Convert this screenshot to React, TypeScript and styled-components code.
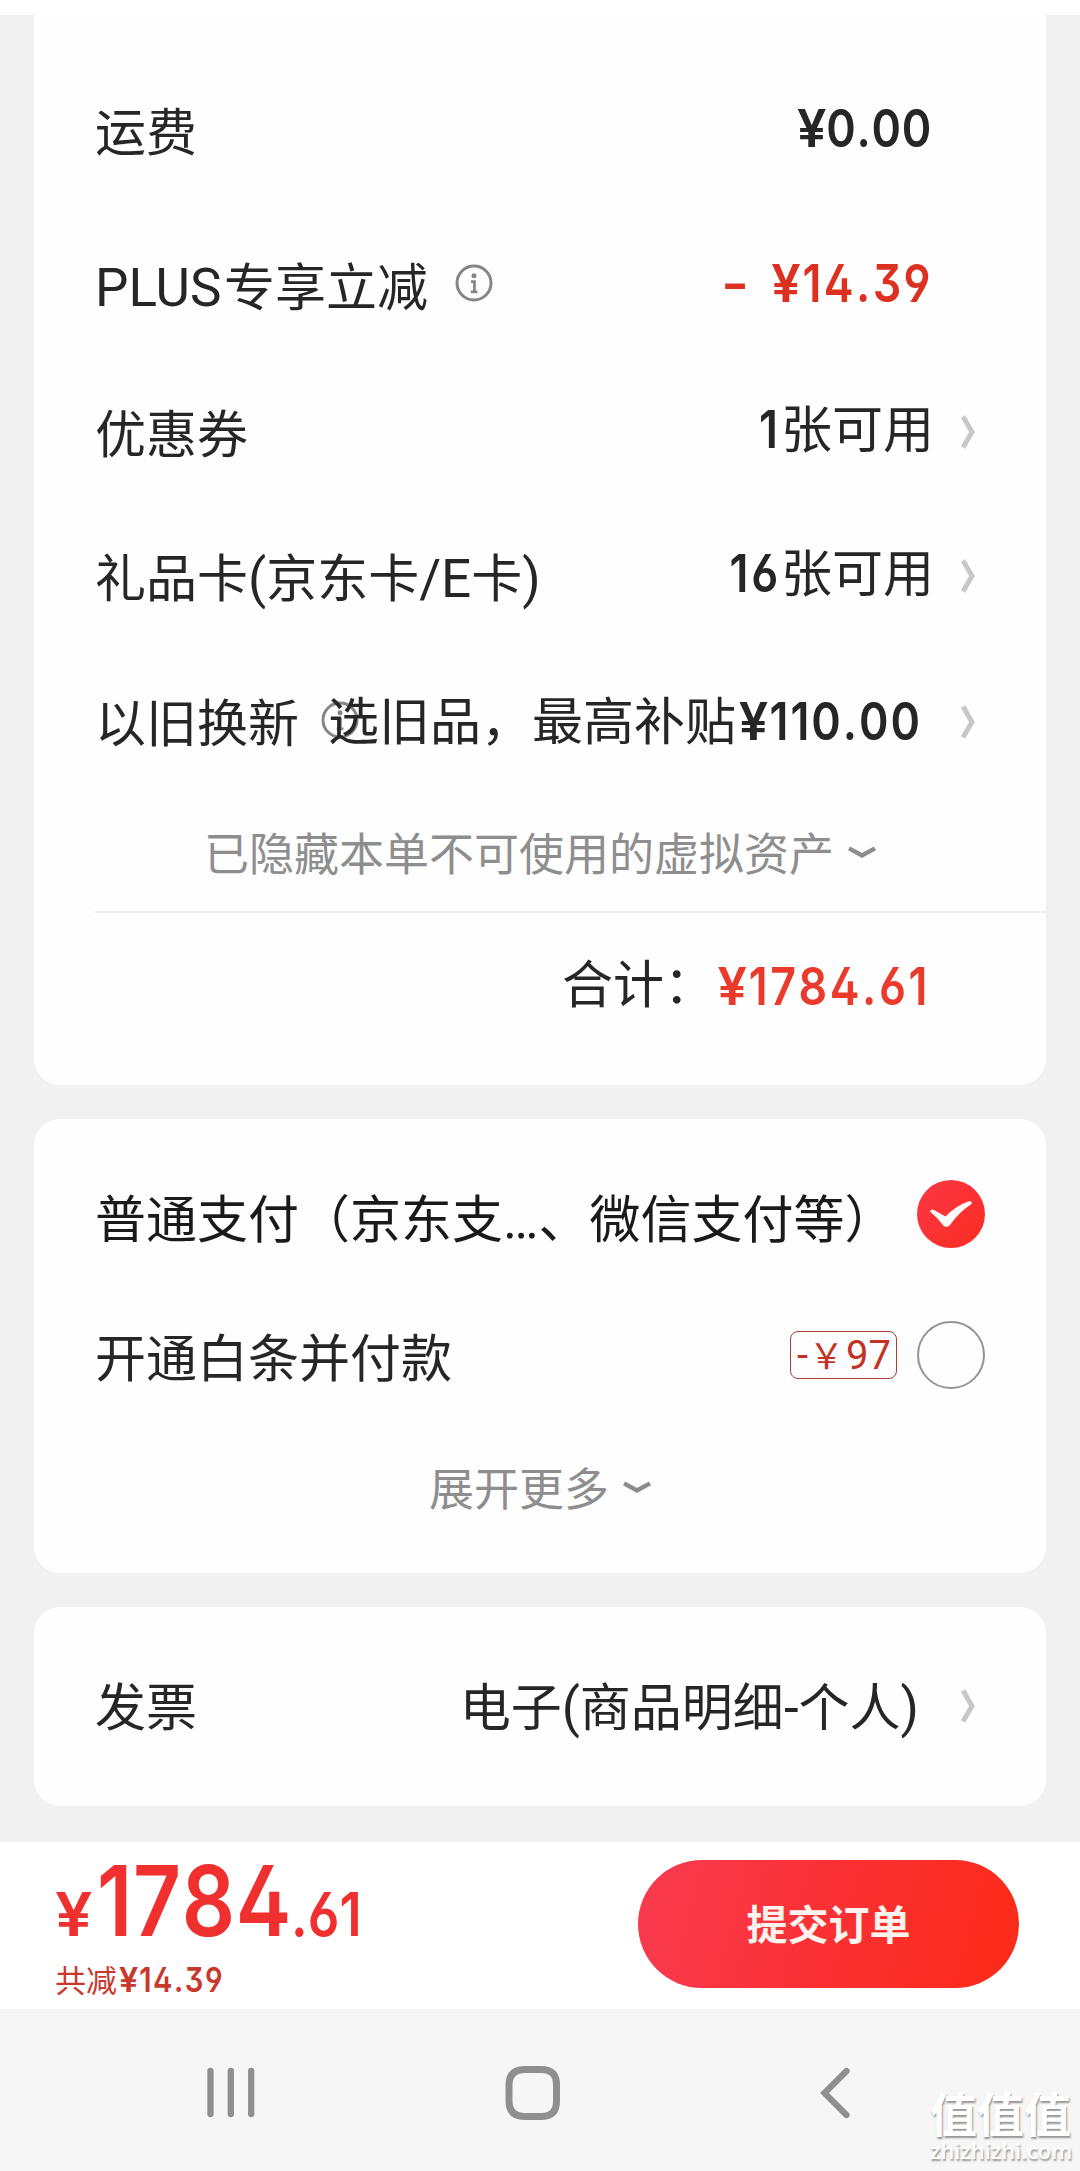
import React from "react";
import styled, { createGlobalStyle } from "styled-components";

const CJK = `"Noto Sans CJK SC", sans-serif`;

const GlobalStyle = createGlobalStyle`
  *, *::before, *::after { box-sizing: border-box; }
  body { margin: 0; background: #f1f1f1; font-family: ${CJK}; color: #262626; }
`;

const Screen = styled.div`
  position: relative;
  display: flex;
  flex-direction: column;
  width: 1080px;
  height: 2171px;
  overflow: hidden;
  background: #f1f1f1;
  white-space: nowrap;
`;

const TopStrip = styled.div`
  height: 15px;
  background: #fff;
`;

const Content = styled.main`
  flex: 1;
  display: flex;
  flex-direction: column;
  gap: 34px;
  padding: 0 34px;
`;

const Card = styled.section<{ $height: number; $top: number; $first?: boolean }>`
  display: flex;
  flex-direction: column;
  flex: none;
  height: ${(p) => p.$height}px;
  padding-top: ${(p) => p.$top}px;
  background: #fefefe;
  border-radius: ${(p) => (p.$first ? "0 0 26px 26px" : "26px")};
`;

const Row = styled.div<{ $gap?: number }>`
  display: flex;
  align-items: center;
  justify-content: space-between;
  height: 80px;
  margin-top: ${(p) => p.$gap ?? 0}px;
  padding: 0 71px 0 61px;
`;

const Label = styled.div<{ $dark?: boolean }>`
  display: flex;
  align-items: baseline;
  font-size: 51px;
  line-height: 80px;
  color: ${(p) => (p.$dark ? "#1a1a1a" : "#262626")};
`;

const Latin = styled.span<{ $w?: number }>`
  width: ${(p) => (p.$w ? `${p.$w}px` : "auto")};
  font-family: Roboto, sans-serif;
  font-size: 53px;
  line-height: 1;
`;

const InfoSlot = styled.span<{ $left: number; $up: number }>`
  align-self: center;
  display: flex;
  margin-left: ${(p) => p.$left}px;
  margin-right: -100px;
  padding-bottom: ${(p) => p.$up}px;
`;

const Side = styled.div`
  display: flex;
  align-items: center;
`;

const Value = styled.div<{ $lift?: number; $right?: number }>`
  display: flex;
  align-items: baseline;
  font-size: 51px;
  line-height: 60px;
  padding-bottom: ${(p) => (p.$lift ?? 0) * 2}px;
  margin-right: ${(p) => p.$right ?? 27}px;
  &::before { content: "\\200b"; }
`;

/* Price numerals: Inter with open and flat-topped figure variants, slightly condensed. */
const Digits = styled.span<{
  $width: number;
  $size?: number;
  $weight?: number;
  $scale?: number;
  $spacing?: number;
  $drop?: number;
  $left?: boolean;
  $color?: string;
}>`
  display: flex;
  flex: none;
  justify-content: ${(p) => (p.$left ? "flex-start" : "flex-end")};
  width: ${(p) => p.$width}px;
  font-family: Inter, sans-serif;
  font-feature-settings: "ss01" 1, "cv02" 1, "cv03" 1, "cv04" 1, "cv09" 1, "kern" 0;
  font-size: ${(p) => p.$size ?? 52}px;
  font-weight: ${(p) => p.$weight ?? 600};
  font-kerning: none;
  letter-spacing: ${(p) => p.$spacing ?? 2}px;
  line-height: 1;
  color: ${(p) => p.$color ?? "inherit"};
  transform: translateY(${(p) => p.$drop ?? 0}px) scaleX(${(p) => p.$scale ?? 0.86});
  transform-origin: ${(p) => (p.$left ? "left" : "right")} center;
`;

const Yen = styled.span`
  display: inline-block;
  margin-right: 0.08em;
  transform: scaleX(1.17);
  transform-origin: left center;
`;

const Minus = styled.span`
  display: inline-block;
  margin-right: 22px;
  transform: scaleX(1.35);
  transform-origin: right center;
`;

const ChevronSlot = styled.span<{ $down?: number }>`
  display: flex;
  width: 14px;
  padding-top: ${(p) => (p.$down ?? 1) * 2}px;
`;

const Fold = styled.div<{ $gap: number; $left: number }>`
  display: flex;
  align-items: center;
  gap: 14px;
  height: 60px;
  margin-top: ${(p) => p.$gap}px;
  padding-left: ${(p) => p.$left}px;
  font-size: 45px;
  line-height: 60px;
  color: #8e8e8e;
`;

const Divider = styled.div`
  flex: none;
  height: 2px;
  margin: 29px 0 0 61px;
  background: #eeeeee;
`;

const Badge = styled.span`
  display: flex;
  align-items: baseline;
  width: 107px;
  height: 48px;
  margin-right: 20px;
  padding-left: 6px;
  border: 1px solid #ab3d32;
  border-radius: 8px;
  color: #c23325;
  font-family: Roboto, sans-serif;
  font-size: 40px;
  line-height: 48px;
`;

const BadgeYen = styled.span`
  width: 38px;
  padding-left: 1px;
  font-family: ${CJK};
  font-size: 35px;
  line-height: 40px;
`;

const Radio = styled.span`
  width: 68px;
  height: 68px;
  border: 2px solid #949494;
  border-radius: 50%;
`;

const PayControl = styled.div<{ $lift?: number }>`
  display: flex;
  align-items: center;
  margin-right: -10px;
  padding-bottom: ${(p) => p.$lift ?? 0}px;
`;

const Footer = styled.footer`
  display: flex;
  justify-content: space-between;
  flex: none;
  height: 167px;
  padding: 18px 61px 0 55px;
  background: #fff;
`;

const Sum = styled.div`
  display: flex;
  flex-direction: column;
  margin-top: -8px;
  color: #f0302f;
`;

const SumLine = styled.div`
  display: flex;
  align-items: baseline;
  height: 98px;
`;

const Saved = styled.div`
  display: flex;
  align-items: baseline;
  gap: 2px;
  margin-top: -1px;
  font-size: 31px;
  line-height: 60px;
  color: #c9382c;
`;

const Submit = styled.button`
  width: 381px;
  height: 128px;
  padding: 0 0 4px 0;
  border: 0;
  border-radius: 64px;
  background: linear-gradient(105deg, #f93a4c 8%, #fa3034 50%, #fb2b1b 92%);
  color: #fff3ee;
  font-family: ${CJK};
  font-size: 41px;
  font-weight: 700;
`;

const NavBar = styled.nav`
  display: flex;
  align-items: flex-start;
  flex: none;
  height: 162px;
  padding: 57px 0 0 205px;
  background: #f6f6f6;
`;

const NavItem = styled.span<{ $w: number }>`
  display: flex;
  flex: none;
  width: ${(p) => p.$w}px;
`;

const Watermark = styled.div`
  position: absolute;
  left: 930px;
  top: 2087px;
  display: flex;
  flex-direction: column;
  color: #fff;
  text-shadow: 1px 2px 2px rgba(0, 0, 0, 0.4);
`;

const MarkName = styled.span`
  font-size: 47px;
  font-weight: 700;
  line-height: 50px;
`;

const MarkUrl = styled.span`
  font-family: "Open Sans", sans-serif;
  font-size: 21.8px;
  font-weight: 600;
  line-height: 28px;
`;

const InfoIcon = () => (
  <svg width="38" height="38" viewBox="0 0 38 38" fill="none">
    <circle cx="19" cy="19" r="17" stroke="#868686" strokeWidth="3" />
    <circle cx="19" cy="11.8" r="2.5" fill="#868686" />
    <path d="M16 17.6h3.4v10M15.8 27.8h6.6" stroke="#868686" strokeWidth="2.8" />
  </svg>
);

const Chevron = () => (
  <svg width="14" height="34" viewBox="0 0 14 34" fill="none">
    <path d="M2 1.5L11 17L2 32.5" stroke="#c8c8c8" strokeWidth="5" />
  </svg>
);

const Down = () => (
  <svg width="28" height="14" viewBox="0 0 28 14" fill="none">
    <path d="M1 3.4L14 10.400L27 3.4" stroke="#8c8c8c" strokeWidth="4.4" />
  </svg>
);

const Checked = () => (
  <svg width="68" height="68" viewBox="0 0 68 68">
    <defs>
      <linearGradient id="check-fill" x1="0" y1="0" x2="1" y2="1">
        <stop offset="0" stopColor="#fb3746" />
        <stop offset="1" stopColor="#fc2c20" />
      </linearGradient>
    </defs>
    <circle cx="34" cy="34" r="34" fill="url(#check-fill)" />
    <path
      d="M13 31.5Q14 28.6 17 30L28.6 36.6Q38 26 52.500 21Q56 21.500 54 24.500Q42.500 31.500 32.800 45.300Q29.500 48.300 26.500 45.800Q20.500 37.500 13 31.500Z"
      fill="#fffafa"
    />
  </svg>
);

export default function App() {
  return (
    <>
      <GlobalStyle />
      <Screen>
        <TopStrip />
        <Content>
          <Card $height={1070} $top={74} $first>
            <Row>
              <Label>运费</Label>
              <Value $lift={4} $right={43}>
                <Digits $width={160} $spacing={0.9}><Yen>¥</Yen>0.00</Digits>
              </Value>
            </Row>
            <Row $gap={75}>
              <Label>
                <Latin $w={129}>PLUS</Latin>专享立减
                <InfoSlot $left={27} $up={2}>
                  <InfoIcon />
                </InfoSlot>
              </Label>
              <Value $lift={4} $right={42}>
                <Digits $width={260} $spacing={2.8} $color="#dc3020">
                  <Minus>-</Minus><Yen>¥</Yen>14.39
                </Digits>
              </Value>
            </Row>
            <Row $gap={67}>
              <Label>优惠券</Label>
              <Side>
                <Value $lift={5}>
                  <Digits $width={40} $spacing={3.5}>1</Digits>张可用
                </Value>
                <ChevronSlot>
                  <Chevron />
                </ChevronSlot>
              </Side>
            </Row>
            <Row $gap={64}>
              <Label>
                礼品卡<Latin>(</Latin>京东卡<Latin>/E</Latin>卡<Latin>)</Latin>
              </Label>
              <Side>
                <Value $lift={5}>
                  <Digits $width={70} $spacing={3.2}>16</Digits>张可用
                </Value>
                <ChevronSlot>
                  <Chevron />
                </ChevronSlot>
              </Side>
            </Row>
            <Row $gap={65}>
              <Label>
                以旧换新
                <InfoSlot $left={22} $up={0}>
                  <InfoIcon />
                </InfoSlot>
              </Label>
              <Side>
                <Value $lift={2} $right={39}>
                  选旧品，最高补贴
                  <Digits $width={186} $spacing={2.3}><Yen>¥</Yen>110.00</Digits>
                </Value>
                <ChevronSlot $down={2}>
                  <Chevron />
                </ChevronSlot>
              </Side>
            </Row>
            <Fold $gap={62} $left={170}>
              已隐藏本单不可使用的虚拟资产
              <Down />
            </Fold>
            <Divider />
            <Row $gap={28}>
              <span />
              <Value $right={45} $lift={0.5}>
                合计：
                <Digits $width={215} $spacing={3} $drop={2} $color="#ea3a2c">
                  <Yen>¥</Yen>1784.61
                </Digits>
              </Value>
            </Row>
          </Card>

          <Card $height={454} $top={57}>
            <Row>
              <Label $dark>
                普通支付（京东支<Latin>…</Latin>、微信支付等）
              </Label>
              <PayControl $lift={4}>
                <Checked />
              </PayControl>
            </Row>
            <Row $gap={59}>
              <Label>开通白条并付款</Label>
              <PayControl>
                <Badge>
                  -<BadgeYen>￥</BadgeYen>97
                </Badge>
                <Radio />
              </PayControl>
            </Row>
            <Fold $gap={62} $left={395}>
              展开更多
              <Down />
            </Fold>
          </Card>

          <Card $height={199} $top={57}>
            <Row>
              <Label>发票</Label>
              <Side>
                <Value $right={42}>
                  电子<Latin>(</Latin>商品明细<Latin>-</Latin>个人<Latin>)</Latin>
                </Value>
                <ChevronSlot $down={2}>
                  <Chevron />
                </ChevronSlot>
              </Side>
            </Row>
          </Card>
        </Content>

        <Footer>
          <Sum>
            <SumLine>
              <Digits $left $width={42} $size={61} $scale={0.93}><Yen>¥</Yen></Digits>
              <Digits $left $width={194} $size={97} $spacing={0.8}>1784</Digits>
              <Digits $left $width={70} $size={61} $spacing={0}>.61</Digits>
            </SumLine>
            <Saved>
              共减
              <Digits $left $width={110} $size={34} $spacing={1.7}><Yen>¥</Yen>14.39</Digits>
            </Saved>
          </Sum>
          <Submit>提交订单</Submit>
        </Footer>

        <NavBar>
          <NavItem $w={298}>
            <svg width="52" height="54" viewBox="0 0 52 54" fill="none">
              <path d="M5.500 5v43M25.800 5v43M46.200 5v43" stroke="#8f8f8f" strokeWidth="6.3" strokeLinecap="round" />
            </svg>
          </NavItem>
          <NavItem $w={315}>
            <svg width="60" height="54" viewBox="0 0 60 54" fill="none">
              <path
                d="M22 3.500H38C49 3.500 53.500 9 53.500 19V35C53.500 45 49 50.500 38 50.500H22C11 50.500 6 45 6 35V19C6 9 11 3.500 22 3.500Z"
                stroke="#8f8f8f"
                strokeWidth="7"
              />
            </svg>
          </NavItem>
          <NavItem $w={40}>
            <svg width="36" height="54" viewBox="0 0 36 54" fill="none">
              <path d="M28.500 5L6.500 27L28.500 49" stroke="#8f8f8f" strokeWidth="6.300" strokeLinecap="round" />
            </svg>
          </NavItem>
        </NavBar>

        <Watermark>
          <MarkName>值值值</MarkName>
          <MarkUrl>zhizhizhi.com</MarkUrl>
        </Watermark>
      </Screen>
    </>
  );
}
